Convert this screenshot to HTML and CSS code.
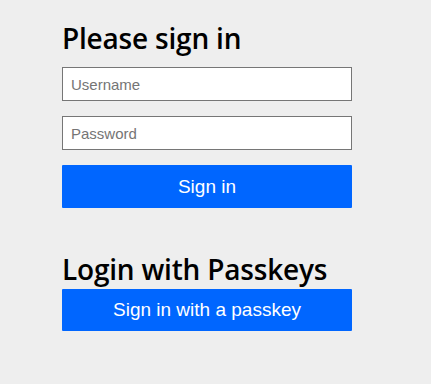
FILE: index.html
```html
<!DOCTYPE html>
<html>
<head>
<meta charset="utf-8">
<link rel="stylesheet" href="styles.css">
</head>
<body>
<div class="content">
  <form class="login-form">
    <h2 class="heading">Please sign in</h2>
    <input class="field" type="text" placeholder="Username">
    <input class="field" type="password" placeholder="Password">
    <button class="button" type="button">Sign in</button>
  </form>
  <div class="passkey-form">
    <h2 class="heading">Login with Passkeys</h2>
    <button class="button passkey" type="button">Sign in with a passkey</button>
  </div>
</div>
</body>
</html>
```
FILE: styles.css
```css
html, body {
  margin: 0;
  padding: 0;
  background: #eeeeee;
}
body {
  font-family: "Open Sans", "Noto Sans", sans-serif;
}
.content {
  padding: 21px 0 0 62px;
  display: flex;
  flex-direction: column;
}
.login-form, .passkey-form {
  width: 290px;
  display: flex;
  flex-direction: column;
}
.heading {
  margin: 0;
  font-size: 28px;
  font-weight: 600;
  line-height: 34px;
  color: #000;
  letter-spacing: -0.2px;
}
.login-form .heading {
  margin-bottom: 12px;
}
.field {
  box-sizing: border-box;
  width: 290px;
  height: 34px;
  margin: 0 0 15px 0;
  padding: 0 8px;
  border: 1px solid #767676;
  background: #fff;
  font-family: "Liberation Sans", Arial, sans-serif;
  font-size: 15px;
  color: #000;
  outline: none;
}
.field::placeholder {
  color: #757575;
}
.button {
  box-sizing: border-box;
  width: 290px;
  height: 43px;
  border: none;
  border-radius: 1px;
  background: #0066ff;
  color: #fff;
  font-family: "Liberation Sans", Arial, sans-serif;
  font-size: 19px;
  padding: 0;
  cursor: pointer;
}
.passkey-form {
  margin-top: 44px;
}
.passkey-form .heading {
  margin-bottom: 3px;
}
.passkey {
  height: 42px;
}
```
